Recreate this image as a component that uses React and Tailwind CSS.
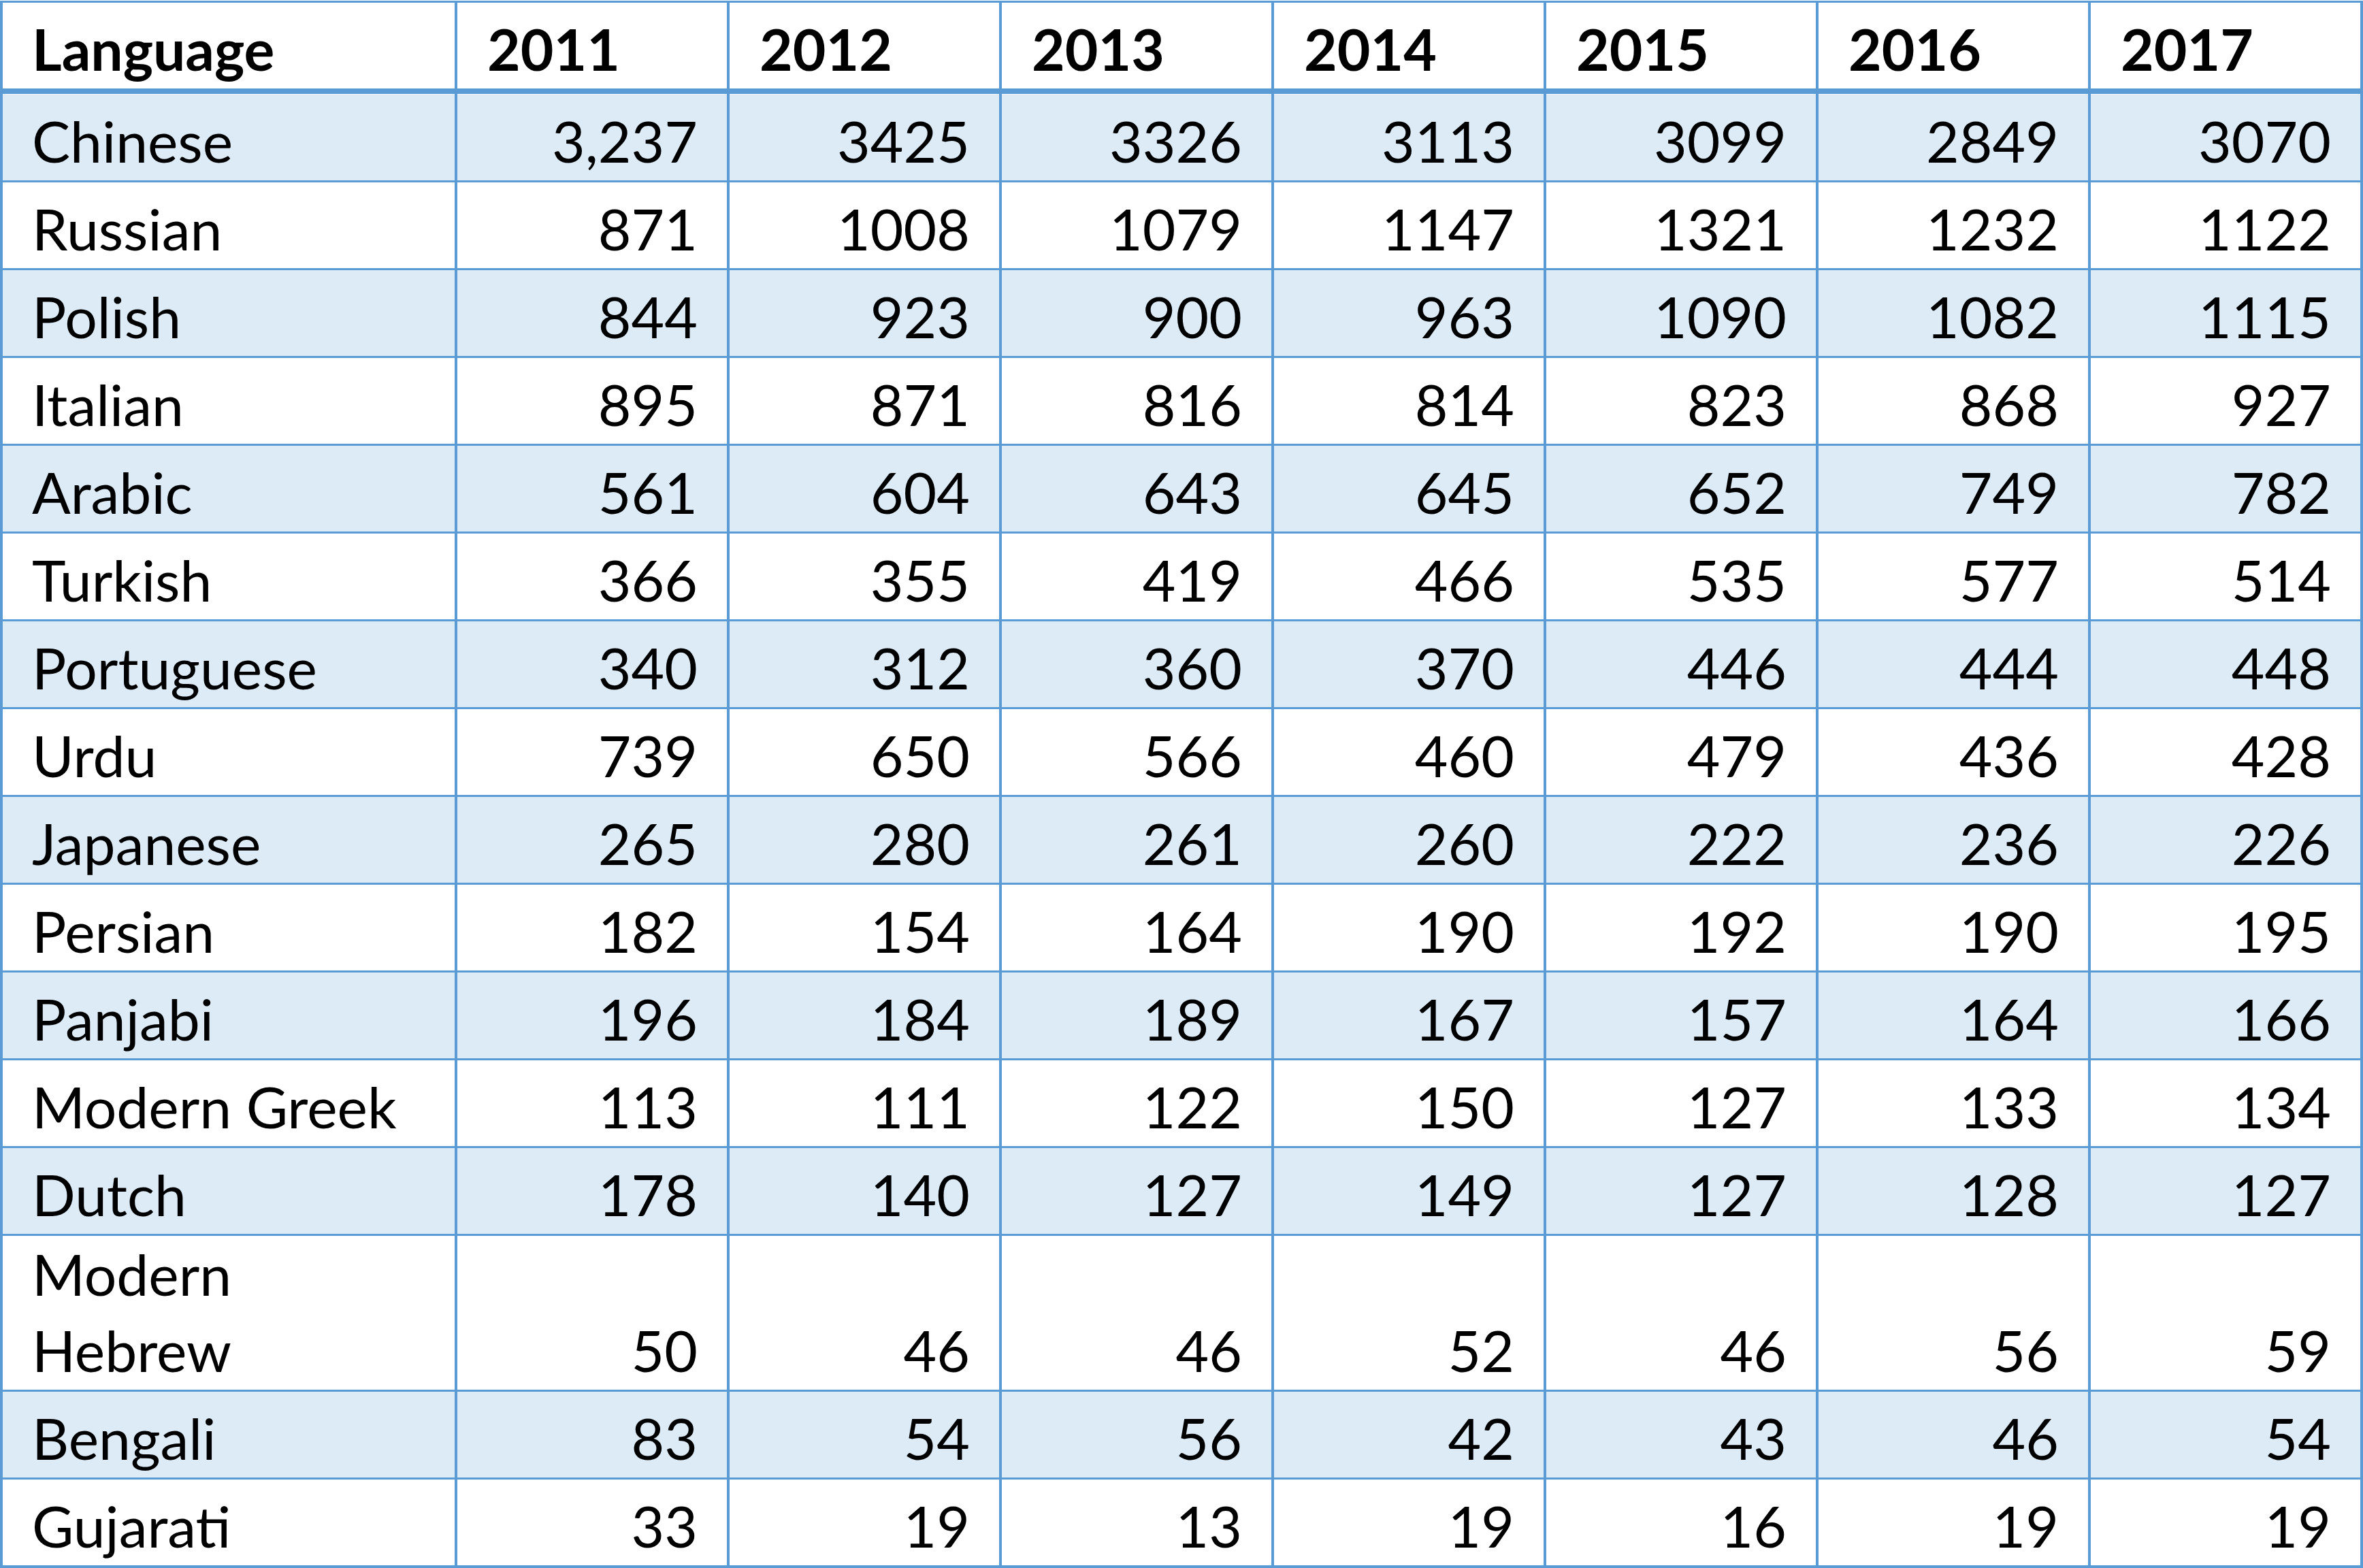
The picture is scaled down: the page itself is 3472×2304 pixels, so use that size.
import React from "react";

const years = ["2011", "2012", "2013", "2014", "2015", "2016", "2017"];

const rows = [
  ["Chinese", "3,237", "3425", "3326", "3113", "3099", "2849", "3070"],
  ["Russian", "871", "1008", "1079", "1147", "1321", "1232", "1122"],
  ["Polish", "844", "923", "900", "963", "1090", "1082", "1115"],
  ["Italian", "895", "871", "816", "814", "823", "868", "927"],
  ["Arabic", "561", "604", "643", "645", "652", "749", "782"],
  ["Turkish", "366", "355", "419", "466", "535", "577", "514"],
  ["Portuguese", "340", "312", "360", "370", "446", "444", "448"],
  ["Urdu", "739", "650", "566", "460", "479", "436", "428"],
  ["Japanese", "265", "280", "261", "260", "222", "236", "226"],
  ["Persian", "182", "154", "164", "190", "192", "190", "195"],
  ["Panjabi", "196", "184", "189", "167", "157", "164", "166"],
  ["Modern Greek", "113", "111", "122", "150", "127", "133", "134"],
  ["Dutch", "178", "140", "127", "149", "127", "128", "127"],
  ["Modern Hebrew", "50", "46", "46", "52", "46", "56", "59"],
  ["Bengali", "83", "54", "56", "42", "43", "46", "54"],
  ["Gujarati", "33", "19", "13", "19", "16", "19", "19"],
];

function App() {
  return (
    <div className="bg-white w-[3472px] pt-[1px] font-['Lato','Open_Sans',sans-serif] text-black">
      <div className="grid grid-cols-[664px_repeat(7,396px)] gap-x-[4px] gap-y-[3px] bg-[#5b9bd5] pt-[3px] px-[4px] pb-[4px] text-[84px] leading-[112px]">
        {/* header */}
        <div className="bg-white h-[131px] border-b-[5px] border-[#5b9bd5] flex items-end pl-[43px] pb-[2px] font-bold">
          Language
        </div>
        {years.map((y) => (
          <div
            key={y}
            className="bg-white h-[131px] border-b-[5px] border-[#5b9bd5] flex items-end pl-[44px] pb-[2px] font-bold"
          >
            {y}
          </div>
        ))}

        {rows.map((r, i) => {
          const band = i % 2 === 0;
          const tall = r[0] === "Modern Hebrew";
          const h = tall ? "h-[226px]" : i === 0 ? "h-[127px] border-t border-white" : "h-[126px]";
          const bg = band ? "bg-[#ddebf7]" : "bg-white";
          return (
            <React.Fragment key={r[0]}>
              <div className={`${bg} ${h} flex items-end pl-[43px] pb-[2px]`}>
                {tall ? (
                  <div>
                    Modern
                    <br />
                    Hebrew
                  </div>
                ) : (
                  r[0]
                )}
              </div>
              {r.slice(1).map((v, j) => (
                <div key={j} className={`${bg} ${h} flex items-end justify-end pr-[43px] pb-[2px]`}>
                  {v}
                </div>
              ))}
            </React.Fragment>
          );
        })}
      </div>
    </div>
  );
}

export default App;
